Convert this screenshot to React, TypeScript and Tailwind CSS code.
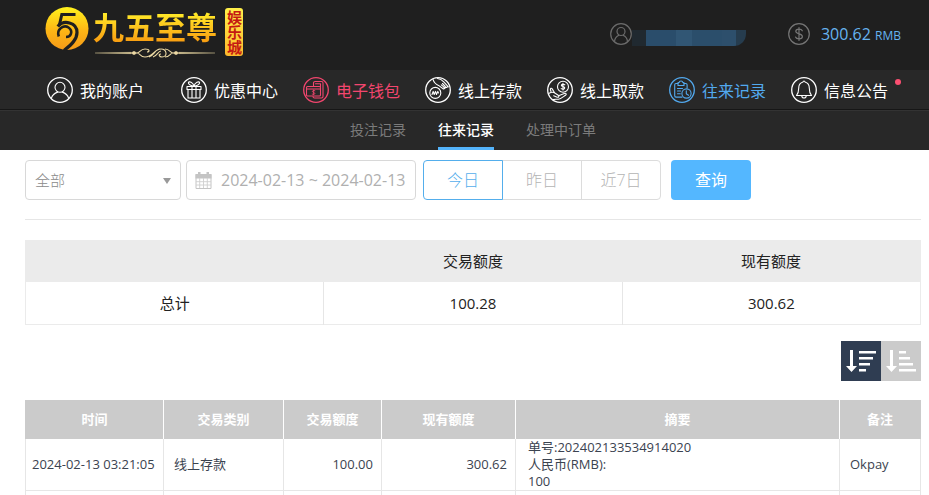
import { useState } from "react";
import type { ReactNode } from "react";

function NavIcon({ children }: { children?: ReactNode }) {
    return (
        <svg viewBox="0 0 26 26" className="w-[26px] h-[26px] shrink-0" fill="none" stroke="currentColor" strokeWidth="1.1" strokeLinecap="round" strokeLinejoin="round" aria-hidden="true">
            <circle cx="13" cy="13" r="12.3" strokeWidth="1.3" />
            {children}
        </svg>
    );
}

const navItems = [
    {
        name: "我的账户",
        color: "text-white",
        icon: (
            <>
                <circle cx="13" cy="10.3" r="5" />
                <path d="M4.3 21.3c1-3.2 3.400-5.300 6.300-6.200M21.700 21.300c-1-3.200-3.400-5.300-6.300-6.200" />
            </>
        ),
    },
    {
        name: "优惠中心",
        color: "text-white",
        icon: (
            <>
                <path d="M6 9.500h14v3H6zM7 12.500h12v8.500H7zM11 9.500V21M15 9.500V21" />
                <path d="M13 9c-1-3.600-5-5.200-5.600-3.300C7 7.500 10.500 8.900 13 9c2.500-.1 6-1.500 5.600-3.300C18 3.800 14 5.400 13 9" />
            </>
        ),
    },
    {
        name: "电子钱包",
        color: "text-[#f2466e]",
        icon: (
            <>
                <path d="M10.500 9V6.200c0-1 .7-1.700 1.700-1.700h6.300c1 0 1.500.6 1.500 1.500v13.500c0 1-.6 1.500-1.500 1.500h-7c-1 0-1.500-.6-1.500-1.500" />
                <rect x="3.500" y="9.500" width="14" height="9.500" rx="1" />
                <path d="M3.500 12h14M12.500 6.800h5v2.700" />
                <path d="M11.900 13.700c-1.500-.7-2.700 0-2.500.9.200 1 2.400.8 2.500 1.800 0 1-1.400 1.300-2.700.7M10.600 13v4.700" strokeWidth="0.800" />
            </>
        ),
    },
    {
        name: "线上存款",
        color: "text-white",
        icon: (
            <>
                <circle cx="10.300" cy="15.900" r="5.500" />
                <path d="M7 17.500l1.200-3.100 1 3.100 1.300-3.100 1 3.100 1.300-3.100.7 1.600" />
                <path d="M8 2.400c.8 2.800 2.500 4.800 5.500 6l4.600 3.300c1.200.6 2-.4 1.200-1.300l-3-2.600" />
                <path d="M12.500 1.500c2.500.4 4.700 1.500 6.300 3.300l4.500 5M18.800 10.700c1.400.7 2.300-.2 1.500-1.200l-2.800-3M20.500 10.200c1.300.6 2.200-.1 1.700-1.200" />
            </>
        ),
    },
    {
        name: "线上取款",
        color: "text-white",
        icon: (
            <>
                <circle cx="16" cy="9.700" r="5.500" />
                <path d="M17.800 7.800c-1.400-1-3.500-.6-3.400.6.1 1.400 3.200 1 3.300 2.500.1 1.300-2 1.700-3.500.7M16 6.400v6.700" />
                <path d="M2.300 16.200c2.300-1.600 4.600-1 6.300.3l2.600 1.700c1.400 1 .5 2.400-1 2l-3.500-1.500" />
                <path d="M11.500 18.700l5.800-2.300c1.800-.6 2.600.9 1.200 1.900-2 1.400-4.300 3.500-7 3.900-2.300.3-3.300-.2-5.300.4M4 14.500l-.6-2c-.3-1.300 1.100-1.700 1.800-.6l2.200 3.600" />
            </>
        ),
    },
    {
        name: "往来记录",
        color: "text-[#52a9ee]",
        icon: (
            <>
                <path d="M9 6.500H7c-.8 0-1.300.5-1.300 1.300v11c0 .8.500 1.300 1.300 1.300h6M15 6.500h1.800c.8 0 1.300.5 1.300 1.300V11" />
                <path d="M9 5.500h1.200c.2-2 3.400-2 3.600 0H15v3H9zM8.500 11.500h5M8.500 14h3M8.500 16.700h2.800" />
                <circle cx="17.500" cy="16.500" r="4.600" />
                <path d="M17.300 13.800v3l2.200 1.500" />
            </>
        ),
    },
    {
        name: "信息公告",
        color: "text-white",
        icon: <path d="M12 5c.2-1.400 1.800-1.400 2 0 3 .8 4.300 3 4.300 6.200 0 3.500.6 5.300 2.200 7.300h-15c1.600-2 2.200-3.800 2.200-7.300C7.700 8 9 5.800 12 5zM10.800 18.700c0 3 4.400 3 4.400 0" />,
    },
];

const subItems = ["投注记录", "往来记录", "处理中订单"];
const days = ["今日", "昨日", "近7日"];

const records = [
    {
        time: "2024-02-13 03:21:05",
        type: "线上存款",
        amount: "100.00",
        balance: "300.62",
        summary: ["单号:202402133534914020", "人民币(RMB):", "100"],
        remark: "Okpay",
    },
];

function Logo() {
    return (
        <a href="#" className="flex items-start">
            <svg viewBox="0 0 44 44" className="w-11 h-11 mt-[7px]" aria-hidden="true">
                <defs>
                    <linearGradient id="coin" x1="0" y1="0" x2="0" y2="1">
                        <stop offset="0" stopColor="#fff21c" />
                        <stop offset="0.55" stopColor="#fdb515" />
                        <stop offset="1" stopColor="#f59a18" />
                    </linearGradient>
                </defs>
                <circle cx="22" cy="21.500" r="21.500" fill="url(#coin)" />
                <g fill="none" stroke="#1f1f1f">
                    <path d="M30.500 7.500H16.800L14.300 18.500" strokeWidth="3" />
                    <path d="M12.800 19.500C18.500 12.500 32 15 32 25.500c0 7-5.500 12-13 18" strokeWidth="3.200" />
                    <path d="M13.800 29.500C11 22 19 17.500 23.500 20.500c5 3.500 2.500 9.500-2.500 9.500" strokeWidth="2.600" />
                </g>
            </svg>
            <span className="flex flex-col ml-1 mt-[11px]">
                <span className="text-[31px] leading-8 font-bold bg-linear-to-b from-[#fff02a] to-[#f79a10] bg-clip-text text-transparent">九五至尊</span>
                <svg viewBox="0 0 124 12" className="w-[124px] h-3 mt-1" fill="none" stroke="#ecd9a4" aria-hidden="true">
                    <path d="M2 6l36-.7v1.400zM122 6l-36-.7v1.400z" fill="#ecd9a4" strokeWidth="0.300" />
                    <path d="M38 6l3-1.800L44 6l-3 1.800zM80 6l3-1.800L86 6l-3 1.800z" fill="#ecd9a4" strokeWidth="0.500" />
                    <path d="M44 6c3 0 3-4 8-4s5 3 2 3M44 6c3 0 3 4 8 4 8 0 9-8 16-8 6 0 7 8 1 8-3 0-4-3-1-3M80 6c-3 0-3-4-8-4M80 6c-3 0-3 4-8 4M56 10c5-1 6-8 11-8M60 10c4-1 5-6 8-6" strokeWidth="1.100" />
                </svg>
            </span>
            <span className="w-[18px] h-12 ml-2 mt-2 rounded-[3px] bg-linear-to-b from-[#fff04a] via-[#ffd43a] to-[#fbb72c] text-[15px] leading-[18px] font-bold text-center text-[#c41a12] [writing-mode:vertical-rl]">娱乐城</span>
        </a>
    );
}

function Header() {
    return (
        <header className="flex justify-between h-[70px] bg-[#1f1f1f] pl-[45px] pr-7">
            <Logo />
            <div className="flex items-center h-[67px]">
                <svg viewBox="0 0 22 22" className="w-[22px] h-[22px]" fill="none" stroke="#6b6b6b" strokeWidth="1.200" aria-hidden="true">
                    <circle cx="11" cy="11" r="10.300" />
                    <circle cx="11" cy="8.500" r="4" />
                    <path d="M4.500 18.800c.2-3.300 2.200-5.600 4.500-6.500M17.500 18.800c-.2-3.300-2.200-5.600-4.500-6.500" />
                </svg>
                {/* masked account name */}
                <div className="flex w-[114px] h-4 mt-2 rounded-br-xl overflow-hidden">
                    <span className="w-[14px] bg-[#202930]" />
                    <span className="w-[30px] bg-[#2a4d6b]" />
                    <span className="w-4 bg-[#315674]" />
                    <span className="w-[30px] bg-[#2b4e6b]" />
                    <span className="w-[14px] bg-[#2d4f6c]" />
                    <span className="grow bg-[#263c4e]" />
                </div>
                <svg viewBox="0 0 22 22" className="w-[22px] h-[22px] ml-[42px]" fill="none" stroke="#757575" strokeWidth="1.200" strokeLinecap="round" aria-hidden="true">
                    <circle cx="11" cy="11" r="10.300" />
                    <path d="M14.300 7.800C13.500 5.500 7.900 5.300 7.800 8.300c-.1 3.200 6.600 1.900 6.600 5.200 0 3.100-6 2.900-6.900.5M11 4.500v13" />
                </svg>
                <p className="ml-[11px] text-[16px] text-[#66b3ef]">300.62 <span className="text-[12px]">RMB</span></p>
            </div>
        </header>
    );
}

function Nav() {
    return (
        <nav className="bg-[#282828]">
            <ul className="flex gap-[25px] h-10 pl-[47px] border-b border-[#161616]">
                {navItems.map((item) => (
                    <li key={item.name} className="relative first:mr-3">
                        <a href="#" className={"flex items-center gap-[7px] h-10 text-[16px] whitespace-nowrap " + item.color}>
                            <NavIcon>{item.icon}</NavIcon>
                            <span className="pt-[2px]">{item.name}</span>
                        </a>
                        {item.name === "信息公告" && <span className="absolute top-[9px] -right-[13px] w-[6px] h-[6px] rounded-full bg-[#fb4f71]" />}
                    </li>
                ))}
            </ul>
            <ul className="flex justify-center gap-8 h-10 pl-[25px] pr-2 border-t border-[#333333] text-[14px]">
                {subItems.map((item, i) => (
                    <li key={item} className="flex">
                        <a href="#" className={i === 1 ? "flex items-center border-b-3 border-[#54b4fb] text-white font-medium" : "flex items-center border-b-3 border-transparent text-[#7b7b7b]"}>{item}</a>
                    </li>
                ))}
            </ul>
        </nav>
    );
}

function Filters() {
    const [day, setDay] = useState(0);
    return (
        <form className="flex items-center pb-[19px] border-b border-[#e6e6e6]" onSubmit={(e) => e.preventDefault()}>
            <div className="relative">
                <select aria-label="交易类别" className="appearance-none w-39 h-10 pl-[9px] rounded border border-[#d8d8d8] bg-white text-[15px] font-light text-[#8a8a8a]">
                    <option>全部</option>
                </select>
                <svg viewBox="0 0 8 6" className="absolute right-[10px] top-[18px] w-2 h-[6px] pointer-events-none" fill="#999" aria-hidden="true">
                    <path d="M0 0h8L4 6z" />
                </svg>
            </div>
            <label className="flex items-center w-[230px] h-10 ml-[5px] pl-2 rounded border border-[#d8d8d8]">
                <svg viewBox="0 0 17 17" className="w-[17px] h-[17px] shrink-0" aria-hidden="true">
                    <path d="M1 2.500h15v14H1z" fill="#fff" stroke="#c4c4c4" />
                    <path d="M.5 2h16v4.500H.5zM3 0h2.500v3H3zM11.500 0H14v3h-2.500z" fill="#c4c4c4" />
                    <path d="M1 9.700h15M1 13h15M4.700 6v10M8.500 6v10M12.300 6v10" stroke="#cfcfcf" strokeWidth="0.900" />
                </svg>
                <input aria-label="日期" readOnly defaultValue="2024-02-13 ~ 2024-02-13" className="w-full min-w-0 ml-[9px] text-[16px] text-[#b0b0b0] outline-none" />
            </label>
            <div className="flex ml-[7px] text-[16px] font-light">
                {days.map((d, i) => (
                    <button
                        key={d}
                        type="button"
                        onClick={() => setDay(i)}
                        className={
                            "w-20 h-10 border first:rounded-l last:rounded-r not-first:-ml-px " +
                            (i === day ? "relative border-[#54aeec] text-[#54aeec]" : "border-[#dcdcdc] text-[#b4b4b4]")
                        }
                    >
                        {d}
                    </button>
                ))}
            </div>
            <button type="submit" className="w-20 h-10 ml-[10px] rounded bg-[#54b7ff] text-[16px] text-white">查询</button>
        </form>
    );
}

function Totals() {
    return (
        <table className="w-full table-fixed mt-5 text-[15px] text-center text-[#222] border border-[#ebebeb]">
            <thead>
                <tr className="h-[41px] bg-[#ebebeb]">
                    <th></th>
                    <th className="font-normal">交易额度</th>
                    <th className="font-normal">现有额度</th>
                </tr>
            </thead>
            <tbody>
                <tr className="h-[43px]">
                    <td>总计</td>
                    <td className="border-l border-[#e6e6e6]">100.28</td>
                    <td className="border-l border-[#e6e6e6]">300.62</td>
                </tr>
            </tbody>
        </table>
    );
}

function SortButtons() {
    return (
        <div className="flex justify-end mt-4">
            <button type="button" aria-label="降序" className="w-10 h-10 bg-[#2f3d52]">
                <svg viewBox="0 0 40 40" className="w-10 h-10" fill="#fff" aria-hidden="true">
                    <path d="M9 9h3v16h4l-5.500 6L5 25h4zM18 10h17v2.500H18zM18 16h14v2.500H18zM18 22h11v2.500H18zM18 28h7v2.500h-7z" />
                </svg>
            </button>
            <button type="button" aria-label="升序" className="w-10 h-10 bg-[#cbcbcb]">
                <svg viewBox="0 0 40 40" className="w-10 h-10" fill="#fff" aria-hidden="true">
                    <path d="M9 9h3v16h4l-5.500 6L5 25h4zM18 10h7v2.500h-7zM18 16h11v2.500H18zM18 22h14v2.500H18zM18 28h17v2.500H18z" />
                </svg>
            </button>
        </div>
    );
}

function Records() {
    return (
        <table className="w-full table-fixed mt-[19px] text-[13px] leading-[17px] text-[#3b4350]">
            <colgroup>
                <col className="w-[138px]" />
                <col className="w-[120px]" />
                <col className="w-[98px]" />
                <col className="w-[134px]" />
                <col />
                <col className="w-[81px]" />
            </colgroup>
            <thead>
                <tr className="h-[39px] bg-[#cbcbcb] text-white *:border-r *:border-white *:last:border-r-[#cbcbcb] *:first:border-l *:first:border-l-[#cbcbcb]">
                    <th>时间</th>
                    <th>交易类别</th>
                    <th>交易额度</th>
                    <th>现有额度</th>
                    <th>摘要</th>
                    <th>备注</th>
                </tr>
            </thead>
            <tbody>
                {records.map((r) => (
                    <tr key={r.time} className="border-b border-[#e6e6e6] *:border-r *:border-[#e6e6e6] *:first:border-l">
                        <td className="pl-[6px] whitespace-nowrap">{r.time}</td>
                        <td className="pl-[10px]">{r.type}</td>
                        <td className="pr-2 text-right">{r.amount}</td>
                        <td className="pr-2 text-right">{r.balance}</td>
                        <td className="pl-3">
                            {r.summary.map((line) => (
                                <p key={line}>{line}</p>
                            ))}
                        </td>
                        <td className="pl-[10px]">{r.remark}</td>
                    </tr>
                ))}
                <tr className="h-1 *:border-r *:border-[#e6e6e6] *:first:border-l">
                    <td></td>
                    <td></td>
                    <td></td>
                    <td></td>
                    <td></td>
                    <td></td>
                </tr>
            </tbody>
        </table>
    );
}

function App() {
    return (
        <div className="bg-white font-['Open_Sans','Noto_Sans_CJK_SC',sans-serif]">
            <Header />
            <Nav />
            <main className="pt-[10px] pl-[25px] pr-2">
                <Filters />
                <Totals />
                <SortButtons />
                <Records />
            </main>
        </div>
    );
}

export default App;
